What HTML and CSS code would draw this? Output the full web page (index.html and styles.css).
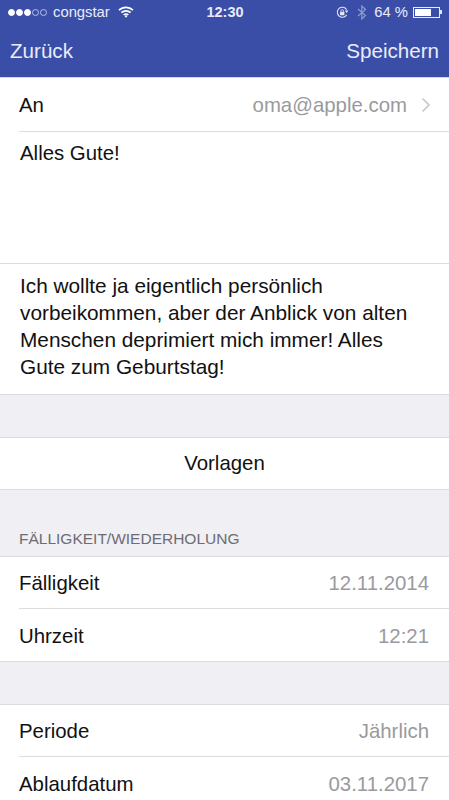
FILE: index.html
```html
<!DOCTYPE html>
<html lang="de">
<head>
  <meta charset="UTF-8">
  <meta name="viewport" content="width=device-width, initial-scale=1.0">
  <title>Grußkarte</title>
  <link rel="stylesheet" href="styles.css">
</head>
<body>
  <div class="phone">
    <div class="header">
      <div class="status">
        <div class="status-left">
          <span class="signal">
            <i class="dot"></i><i class="dot"></i><i class="dot"></i><i class="dot off"></i><i class="dot off"></i>
          </span>
          <span class="carrier">congstar</span>
          <svg class="wifi" width="16" height="12" viewBox="0 0 16 12">
            <path d="M1 4.200a10 10 0 0 1 14 0M3.400 6.700a6.600 6.600 0 0 1 9.200 0M5.700 9a3.200 3.200 0 0 1 4.600 0" fill="none" stroke="#fff" stroke-width="1.700"/>
            <path d="M8 11.800 6.500 10a2.200 2.200 0 0 1 3 0z" fill="#fff"/>
          </svg>
        </div>
        <div class="clock">12:30</div>
        <div class="status-right">
          <svg class="lock" width="15" height="13" viewBox="0 0 15 13">
            <path d="M11.600 8.900A5 5 0 1 1 11.600 3.600" fill="none" stroke="#e4e7f4" stroke-width="1.100"/>
            <path d="M9.800 4.600h3.600L11.600 7z" fill="#e4e7f4"/>
            <rect x="5" y="5.800" width="4.400" height="3.400" rx=".5" fill="#e4e7f4"/>
            <path d="M5.900 5.800V4.900a1.300 1.300 0 0 1 2.600 0v.9" fill="none" stroke="#e4e7f4" stroke-width=".8"/>
          </svg>
          <svg class="bt" width="10" height="15" viewBox="0 0 10 15">
            <path d="M1 4l7.500 6.500L4.800 14V1l3.700 3.500L1 11" fill="none" stroke="#8d9bd0" stroke-width="1.200"/>
          </svg>
          <span class="percent">64 %</span>
          <span class="battery"><span class="battery-fill"></span></span>
          <span class="battery-tip"></span>
        </div>
      </div>
      <div class="navbar">
        <span>Zurück</span>
        <span>Speichern</span>
      </div>
    </div>

    <div class="group top-group">
      <div class="row row-link">
        <span>An</span>
        <span class="value">oma@apple.com</span>
        <svg class="chevron" width="10" height="16" viewBox="0 0 10 16">
          <path d="M1.500 1.500 8 8l-6.500 6.500" fill="none" stroke="#c7c7cc" stroke-width="1.600"/>
        </svg>
      </div>
      <div class="subject">Alles Gute!</div>
      <div class="message">Ich wollte ja eigentlich persönlich vorbeikommen, aber der Anblick von alten Menschen deprimiert mich immer! Alles Gute zum Geburtstag!</div>
    </div>

    <div class="group templates">Vorlagen</div>

    <div class="section-title">FÄLLIGKEIT/WIEDERHOLUNG</div>
    <div class="group">
      <div class="row">
        <span>Fälligkeit</span>
        <span class="value">12.11.2014</span>
      </div>
      <div class="row">
        <span>Uhrzeit</span>
        <span class="value">12:21</span>
      </div>
    </div>

    <div class="group period">
      <div class="row">
        <span>Periode</span>
        <span class="value">Jährlich</span>
      </div>
      <div class="row">
        <span>Ablaufdatum</span>
        <span class="value">03.11.2017</span>
      </div>
    </div>
  </div>
</body>
</html>
```

FILE: styles.css
```css
html, body {
  margin: 0;
  height: 100%;
  overflow: hidden;
}

body {
  background-color: #efeff4;
  color: #111;
  font-family: "Liberation Sans", Arial, sans-serif;
  font-size: 20.400px;
}

.phone {
  width: 449px;
  height: 800px;
  overflow: hidden;
}

.header {
  height: 77px;
  background-color: #3a4ea8;
  color: #e9ecf8;
  border-bottom: 1px solid #d5d7e2;
}

.status {
  height: 24px;
  display: grid;
  grid-template-columns: 1fr auto 1fr;
  align-items: center;
  padding: 0 7px 0 8px;
  font-size: 14.800px;
}

.status-left,
.status-right {
  display: flex;
  align-items: center;
}

.status-right {
  justify-content: flex-end;
}

.signal {
  display: flex;
  gap: 1px;
  margin-right: 6px;
}

.dot {
  width: 7px;
  height: 7px;
  border-radius: 50%;
  background-color: #fff;
  border: 1px solid #fff;
  box-sizing: border-box;
}

.dot.off {
  background: none;
  border-color: #b9c1e3;
}

.wifi {
  margin-left: 8px;
}

.clock {
  font-weight: bold;
  font-size: 14.500px;
}

.bt {
  margin-left: 7px;
}

.percent {
  margin-left: 7px;
}

.battery {
  width: 27px;
  height: 11px;
  margin-left: 5px;
  padding: 1px;
  border: 1px solid #e9ecf8;
  box-sizing: border-box;
  display: block;
}

.battery-fill {
  display: block;
  width: 68%;
  height: 100%;
  background-color: #fff;
}

.battery-tip {
  width: 2px;
  height: 4px;
  background-color: #e9ecf8;
}

.navbar {
  height: 53px;
  display: flex;
  justify-content: space-between;
  align-items: center;
  padding: 0 10px;
  font-size: 20.600px;
}

.group {
  background-color: #fff;
  border-top: 1px solid #dcdce0;
  border-bottom: 1px solid #dcdce0;
}

.top-group {
  border-top: 0;
  height: 316px;
}

.row {
  height: 51px;
  margin-left: 19px;
  padding-right: 20px;
  display: flex;
  justify-content: space-between;
  align-items: center;
  border-bottom: 1px solid #dcdce0;
}

.row > span {
  padding-top: 2px;
}

.group .row:last-child {
  height: 52px;
  border-bottom: 0;
}

.row-link {
  height: 53px;
  padding-right: 18px;
}

.row-link .value {
  margin-left: auto;
  margin-right: 14px;
}

.value {
  color: #9a9a9e;
}

.subject {
  height: 132px;
  padding: 10px 20px 0;
  box-sizing: border-box;
  border-bottom: 1px solid #dcdce0;
}

.message {
  padding: 8px 20px 0;
  line-height: 27px;
  font-size: 20.800px;
}

.templates {
  margin-top: 42px;
  height: 51px;
  line-height: 51px;
  text-align: center;
}

.section-title {
  height: 66px;
  padding: 0 19px 8px;
  box-sizing: border-box;
  display: flex;
  align-items: flex-end;
  font-size: 15.500px;
  color: #6d6d72;
}

.period {
  margin-top: 42px;
}
```
